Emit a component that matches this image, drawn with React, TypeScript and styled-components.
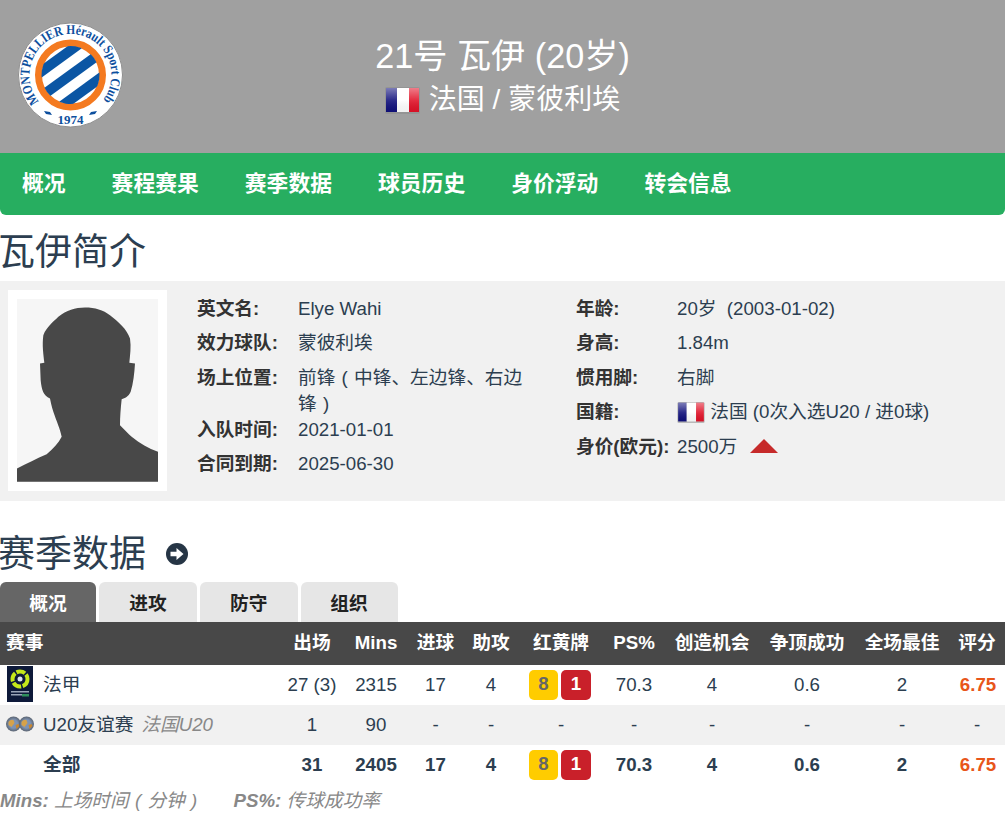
import { useId } from 'react';
import styled, { createGlobalStyle } from 'styled-components';

const GlobalStyle = createGlobalStyle`
  html, body {
    margin: 0;
    padding: 0;
    background: #fff;
    overflow: hidden;
  }
  body {
    color: #2c3e50;
    font-family: "Liberation Sans", "Noto Sans CJK SC", sans-serif;
    font-size: 18.7px;
    line-height: 27px;
  }
`;

const Hero = styled.header`
  position: relative;
  height: 153px;
  background: #a0a0a0;
  color: #fff;
  text-align: center;
`;

const LogoWrap = styled.div`
  position: absolute;
  left: 17px;
  top: 22px;
  width: 107px;
  height: 106px;
`;

const HeroTitle = styled.h1`
  margin: 0;
  padding-top: 33px;
  font-size: 34.2px;
  font-weight: 400;
  line-height: 46px;
`;

const HeroSub = styled.div`
  display: flex;
  align-items: center;
  justify-content: center;
  gap: 9px;
  padding-top: 2px;
  font-size: 28px;
  line-height: 38px;
`;

const Nav = styled.nav`
  display: flex;
  gap: 46px;
  box-sizing: border-box;
  height: 62px;
  padding: 0 0 1px 22px;
  align-items: center;
  background: #27ae60;
  border-radius: 0 0 6px 6px;
`;

const NavItem = styled.a`
  color: #fff;
  font-size: 21.8px;
  font-weight: 700;
`;

const SectionTitle = styled.h2`
  display: flex;
  align-items: center;
  gap: 18px;
  box-sizing: border-box;
  margin: 0 0 0 -2px;
  height: 66px;
  padding-top: 10px;
  color: #2c3e50;
  font-size: 37px;
  font-weight: 400;
  line-height: 50px;
`;

const StatsTitle = styled(SectionTitle)`
  height: 50px;
  margin-top: 29px;
  padding-top: 0;
`;

const ArrowIcon = styled.svg`
  display: block;
  flex: none;
  width: 22px;
  height: 22px;
  margin-left: 2px;
  margin-top: -2px;
`;

const ProfilePanel = styled.section`
  display: flex;
  height: 220px;
  background: #f1f1f1;
`;

const PhotoFrame = styled.div`
  flex: none;
  width: 141px;
  height: 183px;
  margin: 9px 30px 0 8px;
  padding: 9px;
  background: #fff;
`;

const Photo = styled.svg`
  display: block;
  width: 141px;
  height: 183px;
  background: #f6f6f6;
`;

const InfoColumn = styled.div<{ $width: number }>`
  flex: none;
  width: ${(p) => p.$width}px;
  padding-top: 15px;
`;

const InfoRow = styled.div`
  display: flex;
  min-height: 34.4px;
  line-height: 26px;
`;

const InfoLabel = styled.div`
  flex: none;
  width: 101px;
  color: #333;
  font-weight: 700;
`;

const InfoValue = styled.div<{ $width?: number }>`
  align-self: flex-start;
  display: flex;
  align-items: center;
  width: ${(p) => (p.$width ? `${p.$width}px` : 'auto')};
  white-space: pre-wrap;
`;

const WrappedValue = styled.div`
  width: 236px;
`;

const Paren = styled.span`
  display: inline-block;
  width: 1em;
  text-align: center;
`;

const Rise = styled.svg`
  display: block;
  width: 28px;
  height: 16px;
  margin-left: 13px;
  margin-top: -2px;
`;

const Tabs = styled.div`
  display: flex;
  gap: 3px;
  height: 40px;
  margin-top: 2px;
`;

const Tab = styled.button<{ $active?: boolean; $width: number }>`
  width: ${(p) => p.$width}px;
  padding: 0 0 2px;
  border: 0;
  border-radius: 6px 6px 0 0;
  background: ${(p) => (p.$active ? '#666' : '#e6e6e6')};
  color: ${(p) => (p.$active ? '#fff' : '#222')};
  font-family: inherit;
  font-size: 18.7px;
  font-weight: 700;
`;

const StatsTable = styled.table`
  width: 1005px;
  border-collapse: collapse;
  table-layout: fixed;
`;

const HeadRow = styled.tr`
  height: 43px;
  background: #484848;
  color: #fff;
`;

const Th = styled.th<{ $left?: boolean }>`
  padding: 0 0 3px ${(p) => (p.$left ? '6px' : '0')};
  font-size: 18.7px;
  font-weight: 700;
  text-align: ${(p) => (p.$left ? 'left' : 'center')};
  white-space: nowrap;
`;

const Row = styled.tr<{ $shaded?: boolean; $total?: boolean }>`
  height: 40px;
  background: ${(p) => (p.$shaded ? '#f1f1f1' : '#fff')};
  font-weight: ${(p) => (p.$total ? 700 : 400)};
`;

const Td = styled.td<{ $rating?: boolean }>`
  padding: 0 0 2px ${(p) => (p.$rating ? '2px' : '0')};
  color: ${(p) => (p.$rating ? '#e8561a' : 'inherit')};
  font-weight: ${(p) => (p.$rating ? 700 : 'inherit')};
  text-align: center;
  white-space: nowrap;
`;

const LeagueCell = styled.div`
  display: flex;
  align-items: center;
  height: 38px;
  padding-left: 6px;
`;

const LeagueIcon = styled.div`
  display: flex;
  align-items: center;
  justify-content: center;
  flex: none;
  width: 28px;
  margin-right: 9px;
`;

const Muted = styled.em`
  margin-left: 8px;
  color: #888;
`;

const Badges = styled.div`
  display: flex;
  justify-content: center;
  gap: 3px;
  margin: 2px 0 0 -2px;
`;

const Badge = styled.span<{ $red?: boolean }>`
  display: block;
  width: ${(p) => (p.$red ? 30 : 29)}px;
  height: 30px;
  border-radius: 5px;
  background: ${(p) => (p.$red ? '#c9202a' : '#ffcc00')};
  color: ${(p) => (p.$red ? '#fff' : '#666')};
  font-weight: 700;
  line-height: 28px;
`;

const Footnote = styled.p`
  display: flex;
  gap: 30px;
  margin: 2px 0 0;
  color: #888;
  font-style: italic;
`;

const Flag = ({ width, height }: { width: number; height: number }) => {
  const id = useId();
  return (
    <svg width={width} height={height} viewBox="0 0 35 27" style={{ display: 'block', flex: 'none' }}>
      <defs>
        <linearGradient id={id} x1="0" y1="0" x2="0" y2="1">
          <stop offset="0" stopColor="#fff" stopOpacity="0.45" />
          <stop offset="0.5" stopColor="#fff" stopOpacity="0.12" />
          <stop offset="1" stopColor="#000" stopOpacity="0.05" />
        </linearGradient>
      </defs>
      <rect x="0" y="0" width="35" height="27" rx="2" fill="#8a8a8a" opacity="0.55" />
      <rect x="1" y="1" width="11" height="24" fill="#10107c" />
      <rect x="12" y="1" width="12" height="24" fill="#fff" />
      <rect x="24" y="1" width="10" height="24" fill="#e11228" />
      <rect x="1" y="1" width="33" height="24" fill={`url(#${id})`} />
    </svg>
  );
};

const ClubLogo = () => {
  const id = useId();
  return (
    <svg width="107" height="106" viewBox="0 0 107 106">
      <defs>
        <path id={id} d="M 22.1 79.4 A 41 41 0 1 1 84.9 79.4" fill="none" />
        <clipPath id={`${id}c`}>
          <circle cx="53.5" cy="53" r="29" />
        </clipPath>
      </defs>
      <circle cx="53.5" cy="53" r="52" fill="#fff" stroke="#8f8f8f" strokeWidth="1" />
      <text fontFamily="Liberation Serif, serif" fontWeight="700" fontSize="13.5" fill="#0d4f9e">
        <textPath href={`#${id}`} textLength="184" lengthAdjust="spacingAndGlyphs">
          MONTPELLIER Hérault Sport Club
        </textPath>
      </text>
      <circle cx="53.5" cy="53" r="32" fill="#fff" stroke="#f47a20" strokeWidth="7" />
      <g clipPath={`url(#${id}c)`} transform="rotate(-36 53.5 53)">
        <rect x="15" y="28" width="80" height="10" fill="#0b56a4" />
        <rect x="15" y="48" width="80" height="10" fill="#0b56a4" />
        <rect x="15" y="68" width="80" height="10" fill="#0b56a4" />
      </g>
      <text x="53.5" y="102" textAnchor="middle" fontFamily="Liberation Serif, serif" fontWeight="700" fontSize="13" fill="#0d4f9e">
        1974
      </text>
      <path d="M27 89l6 1 2 3-6-1z M80 89l-6 1-2 3 6-1z" fill="#0d4f9e" />
    </svg>
  );
};

const Ligue1Icon = () => (
  <svg width="26" height="36" viewBox="0 0 26 36" style={{ display: 'block' }}>
    <rect width="26" height="36" fill="#0e1a3a" />
    <circle cx="13" cy="13" r="7.5" fill="none" stroke="#c5e81a" strokeWidth="4" strokeDasharray="9 1.5" />
    <circle cx="13" cy="13" r="2.5" fill="#dfe5ee" />
    <rect x="4" y="25" width="18" height="1.5" fill="#9aa5b8" />
    <rect x="4" y="28" width="11" height="1.5" fill="#9aa5b8" />
    <rect x="15" y="28" width="7" height="2.5" fill="#2f8f5c" />
  </svg>
);

const GlobesIcon = () => {
  const id = useId();
  const globe = (cx: number) => (
    <g key={cx}>
      <circle cx={cx} cy="8" r="7.5" fill={`url(#${id})`} />
      <path d={`M${cx - 5} 6q2-3 5-2l1 3-3 4-3-2z`} fill="#d6a24a" />
      <path d={`M${cx + 2} 9l3-1 1 2-3 3z`} fill="#c9862e" />
    </g>
  );
  return (
    <svg width="28" height="16" viewBox="0 0 28 16" style={{ display: 'block' }}>
      <defs>
        <radialGradient id={id}>
          <stop offset="0.55" stopColor="#7d93b5" />
          <stop offset="1" stopColor="#5b6470" />
        </radialGradient>
      </defs>
      {globe(7.5)}
      {globe(20.5)}
    </svg>
  );
};

const columns = [280, 64, 64, 55, 56, 84, 62, 94, 96, 94, 56];
const headers = ['赛事', '出场', 'Mins', '进球', '助攻', '红黄牌', 'PS%', '创造机会', '争顶成功', '全场最佳', '评分'];

const cards = (
  <Badges>
    <Badge>8</Badge>
    <Badge $red>1</Badge>
  </Badges>
);

export default function App() {
  return (
    <>
      <GlobalStyle />
      <Hero>
        <LogoWrap>
          <ClubLogo />
        </LogoWrap>
        <HeroTitle>21号 瓦伊 (20岁)</HeroTitle>
        <HeroSub>
          <Flag width={35} height={27} />
          <span>法国 / 蒙彼利埃</span>
        </HeroSub>
      </Hero>
      <Nav>
        {['概况', '赛程赛果', '赛季数据', '球员历史', '身价浮动', '转会信息'].map((item) => (
          <NavItem key={item}>{item}</NavItem>
        ))}
      </Nav>

      <SectionTitle>瓦伊简介</SectionTitle>
      <ProfilePanel>
        <PhotoFrame>
          <Photo viewBox="51 57 423 548">
            <path
              fill="#484848"
              d="M51 605V565C80 550 110 535 140 522 160 505 175 490 185 470 180 445 170 425 160 395 155 380 152 365 150 355 130 345 125 330 122 300L120 250 133 248C130 220 126 195 130 165 140 140 160 125 175 110 200 90 225 82 255 82 285 82 310 90 330 105 355 125 380 145 390 175 394 200 390 225 388 248L405 250C403 280 400 310 392 335 385 350 375 355 365 357 362 385 360 410 360 435 375 450 385 460 395 470 420 490 445 505 474 515V605Z"
            />
          </Photo>
        </PhotoFrame>
        <InfoColumn $width={379}>
          <InfoRow>
            <InfoLabel>英文名:</InfoLabel>
            <InfoValue>Elye Wahi</InfoValue>
          </InfoRow>
          <InfoRow>
            <InfoLabel>效力球队:</InfoLabel>
            <InfoValue>蒙彼利埃</InfoValue>
          </InfoRow>
          <InfoRow>
            <InfoLabel>场上位置:</InfoLabel>
            <WrappedValue>前锋<Paren>(</Paren>中锋、左边锋、右边锋<Paren>)</Paren></WrappedValue>
          </InfoRow>
          <InfoRow>
            <InfoLabel>入队时间:</InfoLabel>
            <InfoValue>2021-01-01</InfoValue>
          </InfoRow>
          <InfoRow>
            <InfoLabel>合同到期:</InfoLabel>
            <InfoValue>2025-06-30</InfoValue>
          </InfoRow>
        </InfoColumn>
        <InfoColumn $width={429}>
          <InfoRow>
            <InfoLabel>年龄:</InfoLabel>
            <InfoValue>{'20岁  (2003-01-02)'}</InfoValue>
          </InfoRow>
          <InfoRow>
            <InfoLabel>身高:</InfoLabel>
            <InfoValue>1.84m</InfoValue>
          </InfoRow>
          <InfoRow>
            <InfoLabel>惯用脚:</InfoLabel>
            <InfoValue>右脚</InfoValue>
          </InfoRow>
          <InfoRow>
            <InfoLabel>国籍:</InfoLabel>
            <InfoValue>
              <Flag width={28} height={21} />
              <span>&nbsp;法国 (0次入选U20 / 进0球)</span>
            </InfoValue>
          </InfoRow>
          <InfoRow>
            <InfoLabel>身价(欧元):</InfoLabel>
            <InfoValue>
              2500万
              <Rise viewBox="0 0 28 16">
                <path d="M14 1 28 15H0Z" fill="#c62a2a" />
              </Rise>
            </InfoValue>
          </InfoRow>
        </InfoColumn>
      </ProfilePanel>

      <StatsTitle>
        赛季数据
        <ArrowIcon viewBox="0 0 22 22">
          <circle cx="11" cy="11" r="11" fill="#263545" />
          <path d="M4.5 8.8h6V5l7 6-7 6v-3.8h-6z" fill="#fff" />
        </ArrowIcon>
      </StatsTitle>
      <Tabs>
        <Tab $active $width={96}>概况</Tab>
        <Tab $width={98}>进攻</Tab>
        <Tab $width={97.5}>防守</Tab>
        <Tab $width={97}>组织</Tab>
      </Tabs>
      <StatsTable>
        <colgroup>
          {columns.map((width, i) => (
            <col key={i} width={width} />
          ))}
        </colgroup>
        <thead>
          <HeadRow>
            {headers.map((title, i) => (
              <Th key={title} $left={i === 0}>{title}</Th>
            ))}
          </HeadRow>
        </thead>
        <tbody>
          <Row>
            <Td>
              <LeagueCell>
                <LeagueIcon><Ligue1Icon /></LeagueIcon>
                法甲
              </LeagueCell>
            </Td>
            <Td>27 (3)</Td>
            <Td>2315</Td>
            <Td>17</Td>
            <Td>4</Td>
            <Td>{cards}</Td>
            <Td>70.3</Td>
            <Td>4</Td>
            <Td>0.6</Td>
            <Td>2</Td>
            <Td $rating>6.75</Td>
          </Row>
          <Row $shaded>
            <Td>
              <LeagueCell>
                <LeagueIcon><GlobesIcon /></LeagueIcon>
                U20友谊赛
                <Muted>法国U20</Muted>
              </LeagueCell>
            </Td>
            <Td>1</Td>
            <Td>90</Td>
            <Td>-</Td>
            <Td>-</Td>
            <Td>-</Td>
            <Td>-</Td>
            <Td>-</Td>
            <Td>-</Td>
            <Td>-</Td>
            <Td>-</Td>
          </Row>
          <Row $total>
            <Td>
              <LeagueCell>
                <LeagueIcon />
                全部
              </LeagueCell>
            </Td>
            <Td>31</Td>
            <Td>2405</Td>
            <Td>17</Td>
            <Td>4</Td>
            <Td>{cards}</Td>
            <Td>70.3</Td>
            <Td>4</Td>
            <Td>0.6</Td>
            <Td>2</Td>
            <Td $rating>6.75</Td>
          </Row>
        </tbody>
      </StatsTable>
      <Footnote>
        <span><b>Mins:</b> 上场时间<Paren>(</Paren>分钟<Paren>)</Paren></span>
        <span><b>PS%:</b> 传球成功率</span>
      </Footnote>
    </>
  );
}
